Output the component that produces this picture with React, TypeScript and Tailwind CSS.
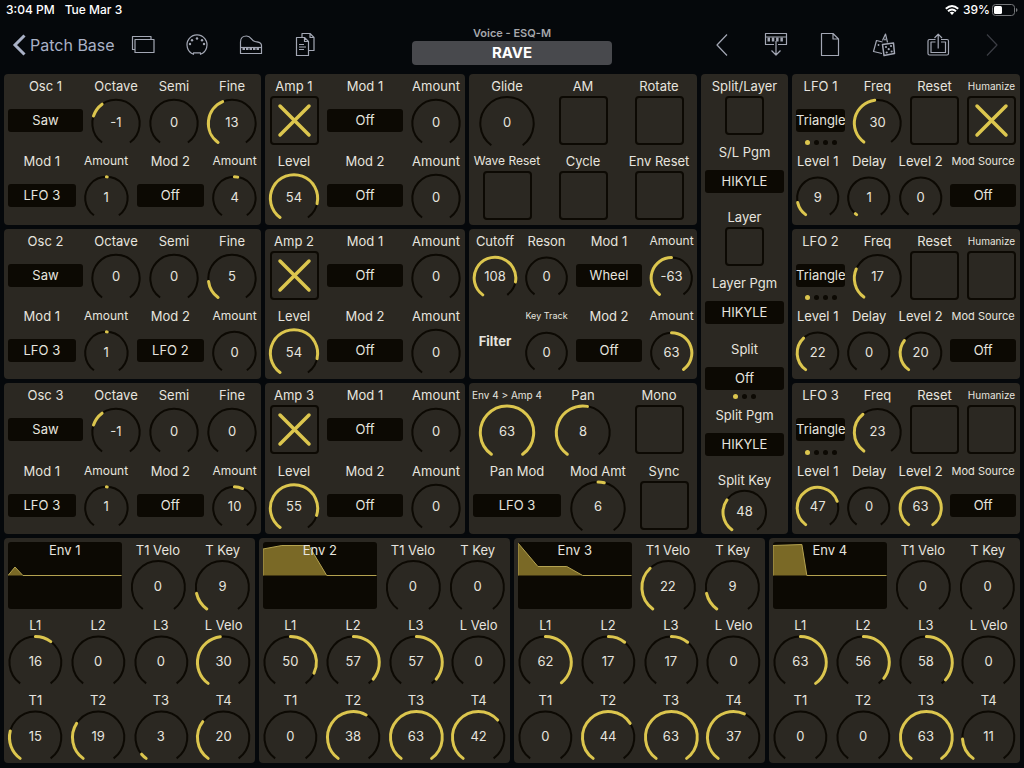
import { useId, useState, type ReactNode } from 'react';
import { clsx } from 'clsx';

const SWEEP = 144; // degrees each side of the top

type Size = 'md' | 'sm' | 'xs' | '2xs' | '3xs';

const polar = (deg: number) => {
  const a = (deg * Math.PI) / 180;
  return `${28 + 26.5 * Math.sin(a)} ${27.5 - 26.5 * Math.cos(a)}`;
};

const arc = (from: number, to: number) =>
  `M${polar(from)} A26.5 26.5 0 ${to - from > 180 ? 1 : 0} 1 ${polar(to)}`;

const Label = ({ htmlFor, children, size = 'md' }: { htmlFor?: string; children: ReactNode; size?: Size }) => (
  <label
    htmlFor={htmlFor}
    className={clsx(
      'flex h-[18px] shrink-0 items-start justify-center whitespace-nowrap leading-4',
      size === 'md' && 'text-[13px]',
      size === 'sm' && 'text-[12px]',
      size === 'xs' && 'text-[11px]',
      size === '2xs' && 'text-[10px]',
      size === '3xs' && 'text-[9px]'
    )}
  >
    {children}
  </label>
);

interface KnobProps {
  label: string;
  value: number;
  min?: number;
  max?: number;
  size?: Size;
}

const Knob = ({ label, value: initial, min = 0, max = 63, size }: KnobProps) => {
  const id = useId();
  const [value, setValue] = useState(initial);
  const toDeg = (v: number) => -SWEEP + ((v - min) / (max - min)) * SWEEP * 2;
  const origin = toDeg(min < 0 ? 0 : min);
  const current = toDeg(value);

  return (
    <div className="flex min-w-0 flex-col">
      <Label htmlFor={id} size={size}>{label}</Label>
      <div className="relative flex min-h-[38px] flex-1 items-center justify-center pt-0.5">
        <svg viewBox="0 0 56 49" className="absolute inset-0 h-full w-full overflow-visible" fill="none" strokeLinecap="round">
          <path d={arc(-SWEEP, SWEEP)} stroke="#0c0903" strokeWidth="2" strokeLinecap="butt" vectorEffect="non-scaling-stroke" />
          {origin !== current && (
            <path
              d={arc(Math.min(origin, current), Math.max(origin, current))}
              stroke="#dcc64e"
              strokeWidth="3"
              vectorEffect="non-scaling-stroke"
            />
          )}
        </svg>
        <span className="relative text-[13px] leading-4">{value}</span>
        <input
          id={id}
          type="range"
          min={min}
          max={max}
          value={value}
          onChange={(e) => setValue(Number(e.target.value))}
          className="absolute inset-0 h-full w-full cursor-pointer opacity-0"
        />
      </div>
    </div>
  );
};

interface PickerProps {
  label: string;
  value: string;
  options?: string[];
  dots?: number;
  size?: Size;
}

const Picker = ({ label, value, options = [], dots = 0, size }: PickerProps) => {
  const id = useId();
  return (
    <div className="flex min-w-0 flex-col">
      <Label htmlFor={id} size={size}>{label}</Label>
      <div className="relative flex flex-1 items-center">
        <select
          id={id}
          defaultValue={value}
          className="h-[23px] w-full appearance-none rounded-[3px] bg-[#0c0903] p-0 text-center text-[13px] leading-[23px]"
        >
          <option>{value}</option>
          {options.map((o) => (
            <option key={o}>{o}</option>
          ))}
        </select>
        {dots > 0 && (
          <div className="absolute inset-x-0 bottom-0 flex justify-center gap-1">
            {Array.from({ length: dots }, (_, i) => (
              <span key={i} className={clsx('size-[5px] rounded-full', i === 0 ? 'bg-[#dcc64e]' : 'bg-[#0c0903]')} />
            ))}
          </div>
        )}
      </div>
    </div>
  );
};

const Toggle = ({ label, on = false, small = false, size }: { label: string; on?: boolean; small?: boolean; size?: Size }) => {
  const id = useId();
  const [checked, setChecked] = useState(on);
  return (
    <div className="flex min-w-0 flex-col">
      <Label htmlFor={id} size={size}>{label}</Label>
      <div className="flex flex-1 items-start justify-center">
        <div
          className={clsx(
            'relative shrink-0 rounded-[4px] border-2 border-[#0c0903]',
            small ? 'size-[39px]' : 'size-[49px]'
          )}
        >
          {checked && (
            <svg viewBox="0 0 45 45" className="h-full w-full" stroke="#dcc64e" strokeWidth="3.5" strokeLinecap="round">
              <path d="M8 8L37 37M37 8L8 37" />
            </svg>
          )}
          <input
            id={id}
            type="checkbox"
            checked={checked}
            onChange={(e) => setChecked(e.target.checked)}
            className="absolute inset-0 h-full w-full cursor-pointer opacity-0"
          />
        </div>
      </div>
    </div>
  );
};

const Panel = ({ children, className }: { children: ReactNode; className?: string }) => (
  <section className={clsx('grid min-w-0 gap-2 rounded-[4px] bg-[#2b2822] p-1', className)}>{children}</section>
);

const Row = ({ cols, children }: { cols: string; children: ReactNode }) => (
  <div className={clsx('grid min-h-[67px] gap-2', cols)}>{children}</div>
);

interface Osc {
  octave: number;
  fine: number;
  mod2: string;
  amount2: number;
}

const OscPanel = ({ n, octave, fine, mod2, amount2 }: Osc & { n: number }) => (
  <Panel className="grid-rows-2">
    <Row cols="grid-cols-[75fr_50fr_50fr_50fr]">
      <Picker label={`Osc ${n}`} value="Saw" options={['Sine', 'Square']} />
      <Knob label="Octave" value={octave} min={-3} max={5} />
      <Knob label="Semi" value={0} max={11} />
      <Knob label="Fine" value={fine} max={31} />
    </Row>
    <Row cols="grid-cols-[68fr_45fr_68fr_45fr]">
      <Picker label="Mod 1" value="LFO 3" />
      <Knob label="Amount" value={1} min={-63} size="sm" />
      <Picker label="Mod 2" value={mod2} />
      <Knob label="Amount" value={amount2} min={-63} size="sm" />
    </Row>
  </Panel>
);

const AmpPanel = ({ n, level }: { n: number; level: number }) => (
  <Panel className="grid-rows-2">
    <Row cols="grid-cols-[50fr_76fr_50fr]">
      <Toggle label={`Amp ${n}`} on />
      <Picker label="Mod 1" value="Off" />
      <Knob label="Amount" value={0} min={-63} />
    </Row>
    <Row cols="grid-cols-[50fr_76fr_50fr]">
      <Knob label="Level" value={level} />
      <Picker label="Mod 2" value="Off" />
      <Knob label="Amount" value={0} min={-63} />
    </Row>
  </Panel>
);

interface Lfo {
  freq: number;
  humanize: boolean;
  level1: number;
  delay: number;
  level2: number;
}

const LfoPanel = ({ n, freq, humanize, level1, delay, level2 }: Lfo & { n: number }) => (
  <Panel className="grid-rows-2">
    <Row cols="grid-cols-4">
      <Picker label={`LFO ${n}`} value="Triangle" options={['Saw', 'Square', 'Noise']} dots={4} />
      <Knob label="Freq" value={freq} />
      <Toggle label="Reset" />
      <Toggle label="Humanize" on={humanize} size="2xs" />
    </Row>
    <Row cols="grid-cols-[43fr_43fr_43fr_65fr]">
      <Knob label="Level 1" value={level1} />
      <Knob label="Delay" value={delay} />
      <Knob label="Level 2" value={level2} />
      <Picker label="Mod Source" value="Off" size="xs" />
    </Row>
  </Panel>
);

interface Env {
  shape: string;
  velo: number;
  tKey: number;
  levels: number[];
  lVelo: number;
  times: number[];
}

const EnvPanel = ({ n, shape, velo, tKey, levels, lVelo, times }: Env & { n: number }) => (
  <Panel>
    <Row cols="grid-cols-[114fr_57fr_57fr]">
      <div className="relative overflow-hidden rounded-[3px] bg-[#0c0903]">
        <svg viewBox="0 0 114 67" preserveAspectRatio="none" className="absolute inset-0 h-full w-full">
          <path d={`M0 33.5 ${shape} Z`} fill="#7a6926" />
          <path d={`M0 33.5 ${shape} H114`} fill="none" stroke="#b5a350" strokeWidth="1" />
        </svg>
        <h2 className="relative text-center text-[13px] leading-4">Env {n}</h2>
      </div>
      <Knob label="T1 Velo" value={velo} />
      <Knob label="T Key" value={tKey} />
    </Row>
    <Row cols="grid-cols-4">
      {levels.map((v, i) => (
        <Knob key={i} label={`L${i + 1}`} value={v} min={-63} />
      ))}
      <Knob label="L Velo" value={lVelo} />
    </Row>
    <Row cols="grid-cols-4">
      {times.map((v, i) => (
        <Knob key={i} label={`T${i + 1}`} value={v} />
      ))}
    </Row>
  </Panel>
);

const IconButton = ({ label, children, dim }: { label: string; children: ReactNode; dim?: boolean }) => (
  <button
    type="button"
    aria-label={label}
    disabled={dim}
    className={clsx('flex h-12 w-[54px] items-center justify-center', dim ? 'text-[#3b3d44]' : 'text-[#a3a7b4]')}
  >
    <svg viewBox="0 0 24 24" className="size-6 overflow-visible" fill="none" stroke="currentColor" strokeWidth="1.2" strokeLinejoin="round">
      {children}
    </svg>
  </button>
);

const Header = () => (
  <header className="grid h-[54px] grid-cols-[1fr_200px_1fr]">
    <div className="flex items-center pb-1">
      <a href="#patch-base" className="flex w-[116px] items-center gap-1 whitespace-nowrap pl-3 text-base text-[#a9b1c6]">
        <svg viewBox="0 0 14 22" className="h-[22px] w-[14px] shrink-0" fill="none" stroke="currentColor" strokeWidth="3">
          <path d="M12.5 1.5L3 11L12.5 20.5" />
        </svg>
        Patch Base
      </a>
      <IconButton label="Windows">
        <path d="M4 6.5h19v13H4zM3.5 16.5H1.5V3.5H20V6.5" />
      </IconButton>
      <IconButton label="MIDI">
        <path d="M8.5 21.3A10 10 0 1 1 15.5 21.3V19.8H8.5Z" />
        <g fill="currentColor" stroke="none">
          <circle cx="5" cy="11" r="1.2" />
          <circle cx="7" cy="7.2" r="1.2" />
          <circle cx="12" cy="5.5" r="1.2" />
          <circle cx="17" cy="7.2" r="1.2" />
          <circle cx="19" cy="11" r="1.2" />
        </g>
      </IconButton>
      <IconButton label="Piano">
        <path d="M1.5 20.5V9C1.5 5 4 3 7.5 3C12.5 3 12 7.5 16 8.5C19 9.2 22.5 8.5 22.5 12.5V20.5Z" />
        <path d="M1.5 14.5H22.5" />
        <path d="M3.5 16h17" strokeWidth="2" strokeDasharray="2.5 1" />
      </IconButton>
      <IconButton label="Copy">
        <path d="M9 4.5V.5H17L21 4.5V17.5H16M17 .5V4.5H21" />
        <path d="M3.5 4.5H11.5L15.5 8.5V22.5H3.5ZM11.5 4.5V8.5H15.5M6 11.5H11M6 14H13M6 16.5H11" />
      </IconButton>
    </div>
    <div className="flex flex-col pt-1.5 text-center">
      <span className="text-[11px] font-semibold leading-[15px] text-[#a6a7ab]">Voice - ESQ-M</span>
      <button type="button" className="h-6 rounded-[4px] bg-[#48494d] text-[15px] font-bold leading-6 text-white">
        RAVE
      </button>
    </div>
    <div className="flex items-center justify-end pb-1 pr-[5px]">
      <IconButton label="Previous">
        <path d="M17 1.5L7 12L17 22.5" />
      </IconButton>
      <IconButton label="Send to synth">
        <path d="M8 11.5H1.5V.5H22.5V11.5H16M8 11.5H10M14 11.5H16M1.5 4H22.5M12 8V22M7.5 17.5L12 22L16.5 17.5" />
        <path d="M3.5 6.5H20.5" strokeWidth="4" strokeDasharray="2.5 1.8" />
      </IconButton>
      <IconButton label="New">
        <path d="M3.5 .5H15L20.5 6V22.5H3.5ZM15 .5V6H20.5" />
      </IconButton>
      <IconButton label="Randomize">
        <path d="M10 20.5L1.5 18.5L4.5 7.5L10.5 9M10.5 7.5L13.5 1L15.5 9.5" />
        <path d="M10.5 11.5L21.5 10L22.5 20.5L12 22.5Z" strokeWidth="1.5" />
        <g fill="currentColor" stroke="none">
          <circle cx="6.5" cy="12" r=".9" />
          <circle cx="14" cy="14" r="1.1" />
          <circle cx="19" cy="13" r="1.1" />
          <circle cx="16.7" cy="16.2" r="1.1" />
          <circle cx="14.7" cy="19.5" r="1.1" />
          <circle cx="19.7" cy="18.5" r="1.1" />
          <circle cx="13" cy="6.5" r=".9" />
        </g>
      </IconButton>
      <IconButton label="Share">
        <path d="M9.5 6.5H3.5Q2 6.5 2 8V20.5Q2 22 3.5 22H21Q22.5 22 22.5 20.5V8Q22.5 6.5 21 6.5H15" />
        <path d="M9.5 9H5V19.5H19.5V9H15M12.2 15.5V1.5M8.5 5L12.2 1.2L16 5" />
      </IconButton>
      <IconButton label="Next" dim>
        <path d="M7 1.5L17 12L7 22.5" />
      </IconButton>
    </div>
  </header>
);

const StatusBar = () => (
  <div className="flex h-5 items-center px-1.5 text-[12px] font-medium text-white">
    <span>3:04 PM</span>
    <span className="ml-2.5">Tue Mar 3</span>
    <svg viewBox="0 0 14 10" className="ml-auto h-[10px] w-[14px]" fill="none" stroke="currentColor" strokeWidth="1.9">
      <path d="M.8 3.8Q7-1.8 13.2 3.8M3 6.2Q7 2.6 11 6.2" />
      <path d="M7 10L4.7 7.6Q7 5.8 9.3 7.6Z" fill="currentColor" stroke="none" />
    </svg>
    <span className="ml-1">39%</span>
    <svg viewBox="0 0 26 12" className="ml-0.5 h-3 w-[26px]">
      <rect x=".5" y=".5" width="22" height="11" rx="3" fill="none" stroke="#75777a" />
      <rect x="2" y="2" width="8" height="8" rx="1.5" fill="#fff" />
      <path d="M24 4Q25.5 4.5 25.5 6T24 8Z" fill="#75777a" />
    </svg>
  </div>
);

const oscs: Osc[] = [
  { octave: -1, fine: 13, mod2: 'Off', amount2: 4 },
  { octave: 0, fine: 5, mod2: 'LFO 2', amount2: 0 },
  { octave: -1, fine: 0, mod2: 'Off', amount2: 10 },
];

const ampLevels = [54, 54, 55];

const lfos: Lfo[] = [
  { freq: 30, humanize: true, level1: 9, delay: 1, level2: 0 },
  { freq: 17, humanize: false, level1: 22, delay: 0, level2: 20 },
  { freq: 23, humanize: false, level1: 47, delay: 0, level2: 63 },
];

const envs: Env[] = [
  { shape: 'L7 25 L15 33.5', velo: 0, tKey: 9, levels: [16, 0, 0], lVelo: 30, times: [15, 19, 3, 20] },
  { shape: 'V7 L19 3.5 H46 L64 33.5', velo: 0, tKey: 0, levels: [50, 57, 57], lVelo: 0, times: [0, 38, 63, 42] },
  { shape: 'V1 L20 24.5 H49 L65 33.5', velo: 22, tKey: 9, levels: [62, 17, 17], lVelo: 0, times: [0, 44, 63, 37] },
  { shape: 'V3.5 L29 2.5 L34 33.5', velo: 0, tKey: 0, levels: [63, 56, 58], lVelo: 0, times: [0, 0, 63, 11] },
];

export default function App() {
  return (
    <div className="flex min-h-screen flex-col bg-[#05080b] font-['Inter','Liberation_Sans',sans-serif] text-[#e6e4df]">
      <StatusBar />
      <Header />
      <main className="flex flex-1 flex-col gap-1 px-1 pb-[5px]">
        <div className="grid flex-1 grid-cols-[257fr_200fr_228fr_87fr_228fr] gap-1">
          <div className="grid min-w-0 grid-rows-3 gap-1">
            {oscs.map((o, i) => (
              <OscPanel key={i} n={i + 1} {...o} />
            ))}
          </div>
          <div className="grid min-w-0 grid-rows-3 gap-1">
            {ampLevels.map((level, i) => (
              <AmpPanel key={i} n={i + 1} level={level} />
            ))}
          </div>
          <div className="grid min-w-0 grid-rows-3 gap-1">
            <Panel className="grid-rows-2">
              <Row cols="grid-cols-3">
                <Knob label="Glide" value={0} />
                <Toggle label="AM" />
                <Toggle label="Rotate" />
              </Row>
              <Row cols="grid-cols-3">
                <Toggle label="Wave Reset" size="sm" />
                <Toggle label="Cycle" />
                <Toggle label="Env Reset" />
              </Row>
            </Panel>
            <Panel className="grid-rows-2">
              <Row cols="grid-cols-[44fr_43fr_66fr_43fr]">
                <Knob label="Cutoff" value={108} max={127} />
                <Knob label="Reson" value={0} />
                <Picker label="Mod 1" value="Wheel" />
                <Knob label="Amount" value={-63} min={-63} size="sm" />
              </Row>
              <Row cols="grid-cols-[44fr_43fr_66fr_43fr]">
                <h2 className="flex items-center justify-center text-[13px] font-bold">Filter</h2>
                <Knob label="Key Track" value={0} size="3xs" />
                <Picker label="Mod 2" value="Off" />
                <Knob label="Amount" value={63} min={-63} size="sm" />
              </Row>
            </Panel>
            <Panel className="grid-rows-2">
              <Row cols="grid-cols-3">
                <Knob label="Env 4 > Amp 4" value={63} size="2xs" />
                <Knob label="Pan" value={8} max={15} />
                <Toggle label="Mono" />
              </Row>
              <Row cols="grid-cols-[88fr_58fr_58fr]">
                <Picker label="Pan Mod" value="LFO 3" />
                <Knob label="Mod Amt" value={6} min={-63} />
                <Toggle label="Sync" />
              </Row>
            </Panel>
          </div>
          <Panel className="grid-rows-7">
            <Toggle label="Split/Layer" small />
            <Picker label="S/L Pgm" value="HIKYLE" />
            <Toggle label="Layer" small />
            <Picker label="Layer Pgm" value="HIKYLE" />
            <Picker label="Split" value="Off" options={['Lower', 'Upper']} dots={3} />
            <Picker label="Split Pgm" value="HIKYLE" />
            <Knob label="Split Key" value={48} min={21} max={108} />
          </Panel>
          <div className="grid min-w-0 grid-rows-3 gap-1">
            {lfos.map((l, i) => (
              <LfoPanel key={i} n={i + 1} {...l} />
            ))}
          </div>
        </div>
        <div className="grid grid-cols-4 gap-1">
          {envs.map((env, i) => (
            <EnvPanel key={i} n={i + 1} {...env} />
          ))}
        </div>
      </main>
    </div>
  );
}
